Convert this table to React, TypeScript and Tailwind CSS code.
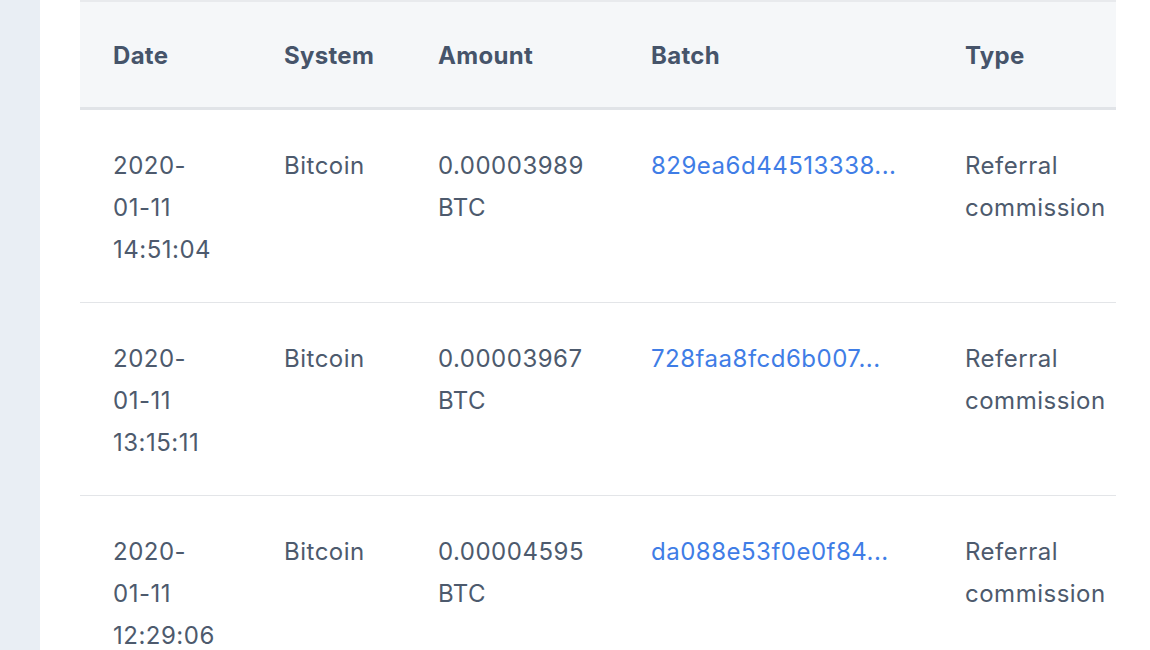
import React from "react";

type Row = {
  date: string;
  day: string;
  time: string;
  amount: string;
  batch: string;
};

const rows: Row[] = [
  { date: "2020-", day: "01-11", time: "14:51:04", amount: "0.00003989", batch: "829ea6d44513338..." },
  { date: "2020-", day: "01-11", time: "13:15:11", amount: "0.00003967", batch: "728faa8fcd6b007..." },
  { date: "2020-", day: "01-11", time: "12:29:06", amount: "0.00004595", batch: "da088e53f0e0f84..." },
];

const grid = "grid grid-cols-[171px_154px_213px_314px_184px]";

export default function App() {
  return (
    <div className="flex h-[650px] w-[1150px] overflow-hidden bg-white font-['Inter',sans-serif]">
      <div className="w-[40px] shrink-0 bg-[#e9eef4]" />
      <div className="flex-1 pl-[40px]">
        <div className="w-[1036px]">
          <div className={`${grid} h-[110px] border-t-2 border-b-[3px] border-t-[#e8eaed] border-b-[#e1e4e8] bg-[#f5f7f9] items-center pt-[2px]`}>
            {["Date", "System", "Amount", "Batch", "Type"].map((h) => (
              <div key={h} className="pl-[33px] text-[24px] font-bold tracking-[0.3px] text-[#46546a]">
                {h}
              </div>
            ))}
          </div>
          {rows.map((r) => (
            <div
              key={r.time}
              className={`${grid} border-b border-[#e3e5e8] pt-[35px] pb-[31px] text-[24px] leading-[42px] tracking-[0.5px] text-[#4d5a6d]`}
            >
              <div className="pl-[33px]">
                <div>{r.date}</div>
                <div>{r.day}</div>
                <div>{r.time}</div>
              </div>
              <div className="pl-[33px]">Bitcoin</div>
              <div className="pl-[33px]">
                <div>{r.amount}</div>
                <div>BTC</div>
              </div>
              <div className="pl-[33px]">
                <a className="text-[#3f7de6]" href="#">
                  {r.batch}
                </a>
              </div>
              <div className="pl-[33px]">
                <div>Referral</div>
                <div>commission</div>
              </div>
            </div>
          ))}
        </div>
      </div>
    </div>
  );
}
